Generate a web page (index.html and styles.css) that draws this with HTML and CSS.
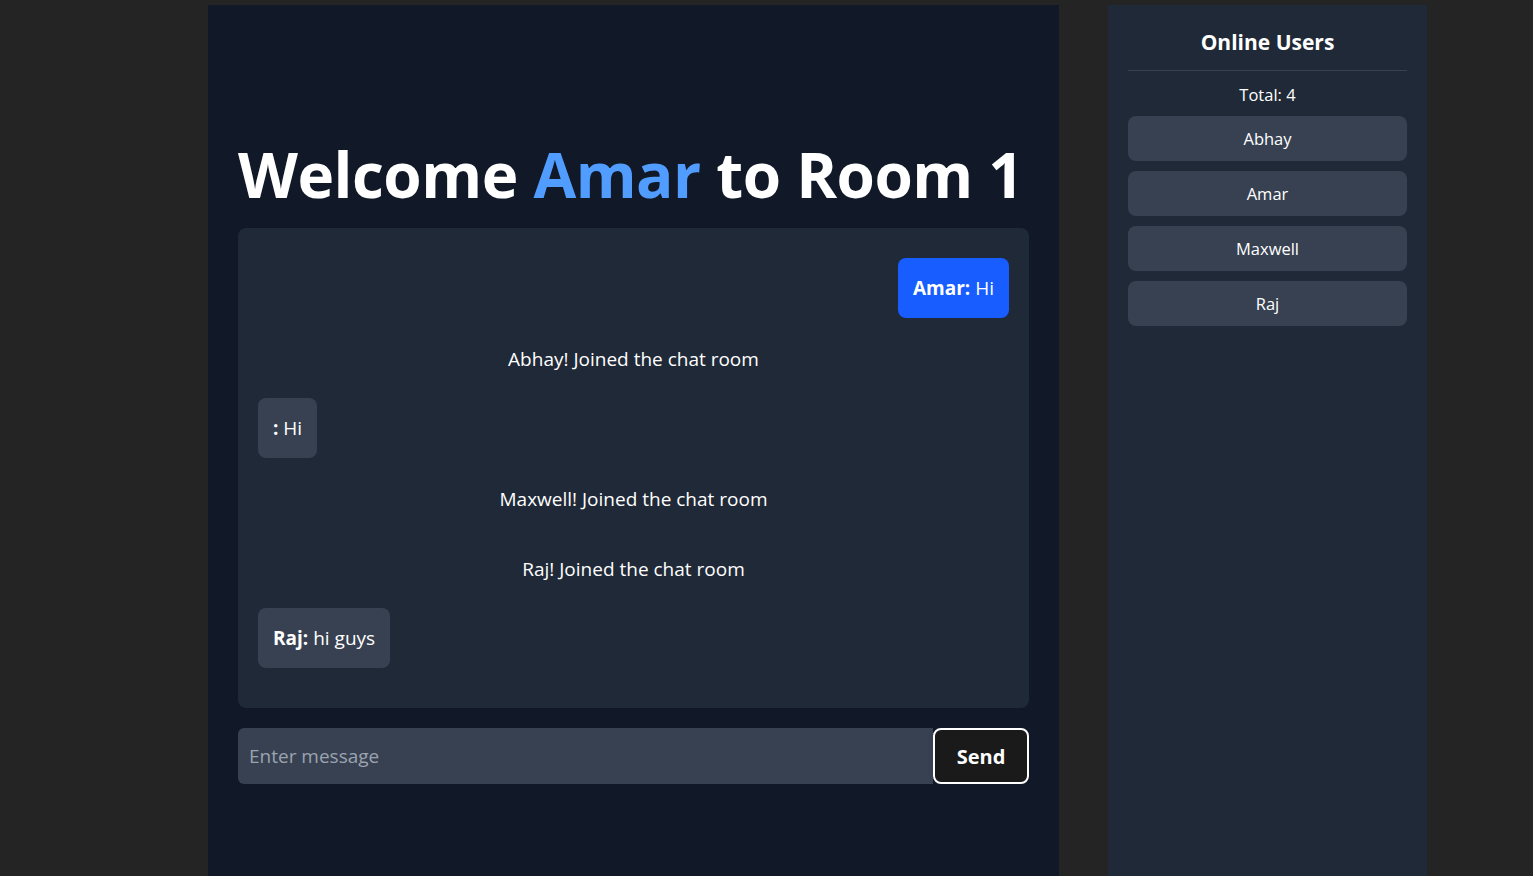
FILE: index.html
```html
<!DOCTYPE html>
<html lang="en">
<head>
<meta charset="utf-8">
<title>Chat Room</title>
<link rel="stylesheet" href="styles.css">
</head>
<body>
<div class="app">
  <main class="room">
    <h1 class="title">Welcome <span class="accent">Amar</span> to Room 1</h1>
    <section class="chat">
      <div class="msg msg-own"><b>Amar:</b> Hi</div>
      <div class="sys">Abhay! Joined the chat room</div>
      <div class="msg msg-other"><b>:</b> Hi</div>
      <div class="sys">Maxwell! Joined the chat room</div>
      <div class="sys">Raj! Joined the chat room</div>
      <div class="msg msg-other"><b>Raj:</b> hi guys</div>
    </section>
    <form class="composer">
      <input class="composer-input" type="text" placeholder="Enter message">
      <button class="composer-send" type="button">Send</button>
    </form>
  </main>
  <aside class="users">
    <h2 class="users-title">Online Users</h2>
    <div class="users-total">Total: 4</div>
    <ul class="users-list">
      <li class="user">Abhay</li>
      <li class="user">Amar</li>
      <li class="user">Maxwell</li>
      <li class="user">Raj</li>
    </ul>
  </aside>
</div>
</body>
</html>
```

FILE: styles.css
```css
* { box-sizing: border-box; }
html, body { margin: 0; padding: 0; }
body {
  background: #242424;
  color: #ffffff;
  font-family: "Open Sans", "Noto Sans", sans-serif;
  height: 876px;
  overflow: hidden;
}
.app {
  display: flex;
  align-items: stretch;
  gap: 49px;
  padding: 5px 0 0 208px;
  height: 100%;
}
.room {
  width: 851px;
  background: #111827;
  padding: 135px 30px 0 30px;
}
.title {
  margin: 0 0 20px 0;
  font-size: 62px;
  line-height: 68px;
  font-weight: 700;
  letter-spacing: -0.5px;
  white-space: nowrap;
}
.accent { color: #509dff; }
.chat {
  background: #1f2937;
  border-radius: 8px;
  padding: 30px 20px 40px;
  display: flex;
  flex-direction: column;
  gap: 10px;
}
.msg {
  padding: 16px 15px;
  font-size: 19px;
  line-height: 28px;
  border-radius: 8px;
  align-self: flex-start;
}
.msg b { font-weight: 700; }
.msg-own { align-self: flex-end; background: #175dff; }
.msg-other { background: #374151; }
.sys {
  padding: 17px 0 15px;
  font-size: 19px;
  line-height: 28px;
  text-align: center;
}
.composer {
  display: flex;
  margin-top: 20px;
  height: 56px;
}
.composer-input {
  flex: 1;
  background: #374151;
  border: none;
  border-radius: 6px 0 0 6px;
  color: #fff;
  font-family: inherit;
  font-size: 19px;
  padding: 0 11px;
  outline: none;
}
.composer-input::placeholder { color: #9ca3af; }
.composer-send {
  width: 96px;
  background: #1a1a1a;
  border: 2px solid #ffffff;
  border-radius: 8px;
  color: #fff;
  font-family: inherit;
  font-size: 20px;
  font-weight: 700;
}
.users {
  width: 319px;
  background: #1f2937;
  padding: 21px 20px 20px;
}
.users-title {
  margin: 0;
  font-size: 21px;
  line-height: 32px;
  font-weight: 700;
  text-align: center;
  padding-bottom: 12px;
  border-bottom: 1px solid #374151;
}
.users-total {
  margin-top: 10px;
  font-size: 16.5px;
  line-height: 28px;
  text-align: center;
}
.users-list {
  list-style: none;
  margin: 7px 0 0 0;
  padding: 0;
  display: flex;
  flex-direction: column;
  gap: 10px;
}
.user {
  height: 45px;
  background: #374151;
  border-radius: 8px;
  display: flex;
  align-items: center;
  justify-content: center;
  font-size: 16.5px;
}
```
